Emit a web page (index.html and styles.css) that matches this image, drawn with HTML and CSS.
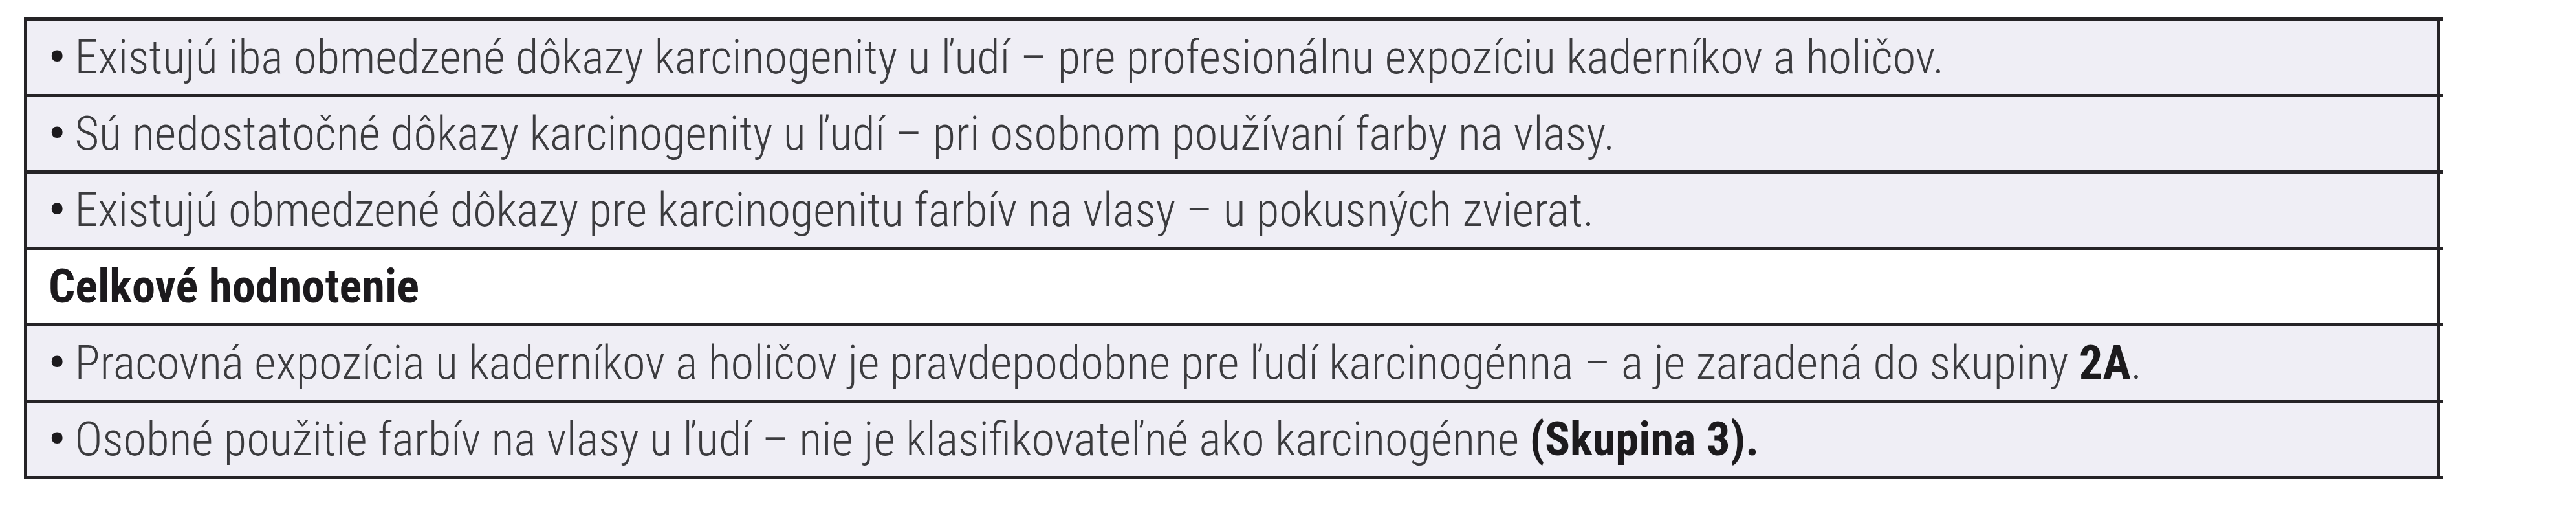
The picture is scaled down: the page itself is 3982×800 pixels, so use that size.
FILE: index.html
```html
<!DOCTYPE html>
<html lang="sk">
<head>
<meta charset="utf-8">
<title>Hodnotenie karcinogenity</title>
<link rel="stylesheet" href="styles.css">
</head>
<body>
<div class="table">
  <div class="row shade"><span class="txt"><span class="dot">•</span> Existujú iba obmedzené dôkazy karcinogenity u ľudí – pre profesionálnu expozíciu kaderníkov a holičov.</span></div>
  <div class="row shade"><span class="txt"><span class="dot">•</span> Sú nedostatočné dôkazy karcinogenity u ľudí – pri osobnom používaní farby na vlasy.</span></div>
  <div class="row shade"><span class="txt"><span class="dot">•</span> Existujú obmedzené dôkazy pre karcinogenitu farbív na vlasy – u pokusných zvierat.</span></div>
  <div class="row plain"><span class="txt"><b>Celkové hodnotenie</b></span></div>
  <div class="row shade"><span class="txt"><span class="dot">•</span> Pracovná expozícia u kaderníkov a holičov je pravdepodobne pre ľudí karcinogénna – a je zaradená do skupiny <b>2A</b>.</span></div>
  <div class="row shade"><span class="txt"><span class="dot">•</span> Osobné použitie farbív na vlasy u ľudí – nie je klasifikovateľné ako karcinogénne <b>(Skupina 3).</b></span></div>
</div>
</body>
</html>
```
FILE: styles.css
```css
html, body {
  margin: 0;
  padding: 0;
  background: #ffffff;
}
body {
  font-family: "Roboto Condensed", "Liberation Sans", sans-serif;
  font-weight: 300;
  font-size: 72.5px;
  color: #3b3b3e;
}
.table {
  margin: 27px 0 0 37px;
  width: 3736px;
  border-top: 5px solid #252326;
  border-left: 4px solid #252326;
}
.row {
  height: 113px;
  border-bottom: 5px solid #252326;
  display: flex;
  align-items: center;
  padding-left: 34px;
  white-space: nowrap;
}
.txt {
  display: block;
  line-height: 1.15;
}
.dot {
  font-weight: 700;
  color: #1c1a1d;
  letter-spacing: -2px;
}
.shade {
  background: linear-gradient(to left, transparent 5px, #252326 5px, #252326 10px, #efeef5 10px);
}
.plain {
  background: linear-gradient(to left, transparent 5px, #252326 5px, #252326 10px, #ffffff 10px);
}
b {
  font-weight: 700;
  color: #1c1a1d;
}
```
